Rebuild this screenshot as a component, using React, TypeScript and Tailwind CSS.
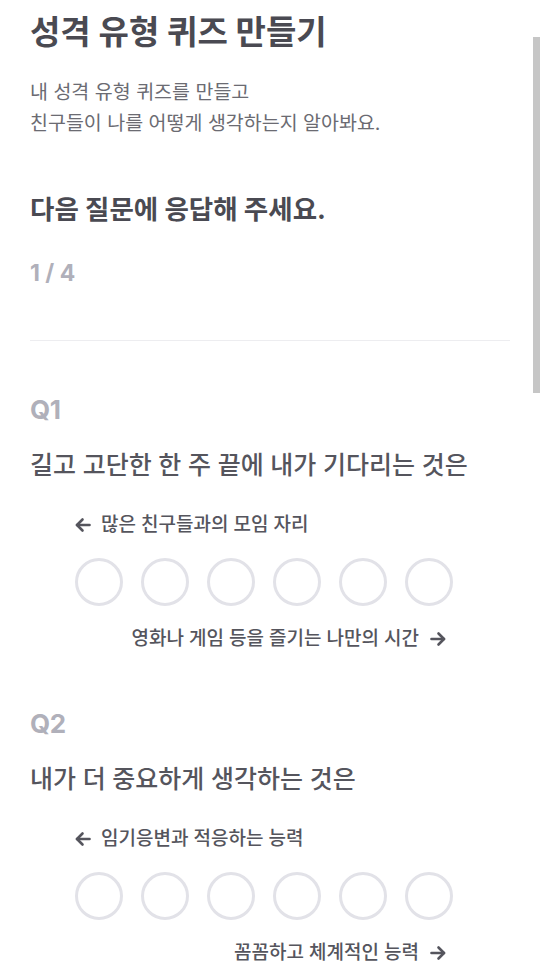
import { useState } from "react";

type Question = {
  id: string;
  text: string;
  left: string;
  right: string;
};

const QUESTIONS: Question[] = [
  {
    id: "Q1",
    text: "길고 고단한 한 주 끝에 내가 기다리는 것은",
    left: "많은 친구들과의 모임 자리",
    right: "영화나 게임 등을 즐기는 나만의 시간",
  },
  {
    id: "Q2",
    text: "내가 더 중요하게 생각하는 것은",
    left: "임기응변과 적응하는 능력",
    right: "꼼꼼하고 체계적인 능력",
  },
];

function ArrowLeft() {
  return (
    <svg width="16" height="16" viewBox="0 0 16 16" fill="none" stroke="currentColor" strokeWidth={2.6} strokeLinecap="round" strokeLinejoin="round">
      <path d="M14.5 8H2" />
      <path d="M7.5 2.5L2 8l5.5 5.5" />
    </svg>
  );
}

function ArrowRight() {
  return (
    <svg width="16" height="16" viewBox="0 0 16 16" fill="none" stroke="currentColor" strokeWidth={2.6} strokeLinecap="round" strokeLinejoin="round">
      <path d="M1.5 8H14" />
      <path d="M8.5 2.5L14 8l-5.5 5.5" />
    </svg>
  );
}

function QuestionBlock({ q, value, onChange }: { q: Question; value: number | null; onChange: (v: number) => void }) {
  return (
    <div className="mt-[56px] first-of-type:mt-[53px]">
      <div className="text-[26px] leading-[32px] font-bold text-[#b0b0ba] tracking-[-0.02em]">{q.id}</div>
      <div className="mt-[23px] text-[25px] leading-[32px] font-medium text-[#55555d]">{q.text}</div>

      <div className="ml-[45px] w-[378px]">
        <div className="mt-[31px] flex items-center gap-[10px] text-[19px] leading-[26px] font-medium text-[#55555d]">
          <ArrowLeft />
          <span>{q.left}</span>
        </div>
        <div className="mt-[20px] flex gap-[18px]">
          {[0, 1, 2, 3, 4, 5].map((i) => (
            <button
              key={i}
              onClick={() => onChange(i)}
              className={`w-[48px] h-[48px] rounded-full border-[3px] ${value === i ? "border-[#7b7bf0] bg-[#ecebff]" : "border-[#e2e2e8] bg-white"}`}
            />
          ))}
        </div>
        <div className="mt-[20px] flex items-center justify-end gap-[11px] pr-[7px] text-[19px] leading-[26px] font-medium text-[#55555d]">
          <span>{q.right}</span>
          <ArrowRight />
        </div>
      </div>
    </div>
  );
}

export default function App() {
  const [answers, setAnswers] = useState<Record<string, number | null>>({});

  return (
    <div className="relative min-h-screen bg-white" style={{ fontFamily: "Inter, 'Noto Sans CJK KR', sans-serif" }}>
      <div className="px-[30px] pt-[14px] pb-[20px]">
        <h1 className="text-[33px] leading-[36px] font-bold text-[#4a4a52]">성격 유형 퀴즈 만들기</h1>
        <p className="mt-[27px] text-[19.5px] leading-[31px] text-[#6b6b72]">
          내 성격 유형 퀴즈를 만들고
          <br />
          친구들이 나를 어떻게 생각하는지 알아봐요.
        </p>

        <h2 className="mt-[54px] text-[26.5px] leading-[32px] font-bold text-[#4a4a52]">다음 질문에 응답해 주세요.</h2>
        <div className="mt-[34px] text-[23px] leading-[28px] font-bold text-[#b0b0ba]">1 / 4</div>

        <div className="mt-[53px] h-px bg-[#ededf0]" />

        <section>
          {QUESTIONS.map((q) => (
            <QuestionBlock
              key={q.id}
              q={q}
              value={answers[q.id] ?? null}
              onChange={(v) => setAnswers((prev) => ({ ...prev, [q.id]: v }))}
            />
          ))}
        </section>
      </div>

      {/* scroll thumb */}
      <div className="absolute right-0 top-[37px] w-[7px] h-[356px] bg-[#c6c6c6]" />
    </div>
  );
}
